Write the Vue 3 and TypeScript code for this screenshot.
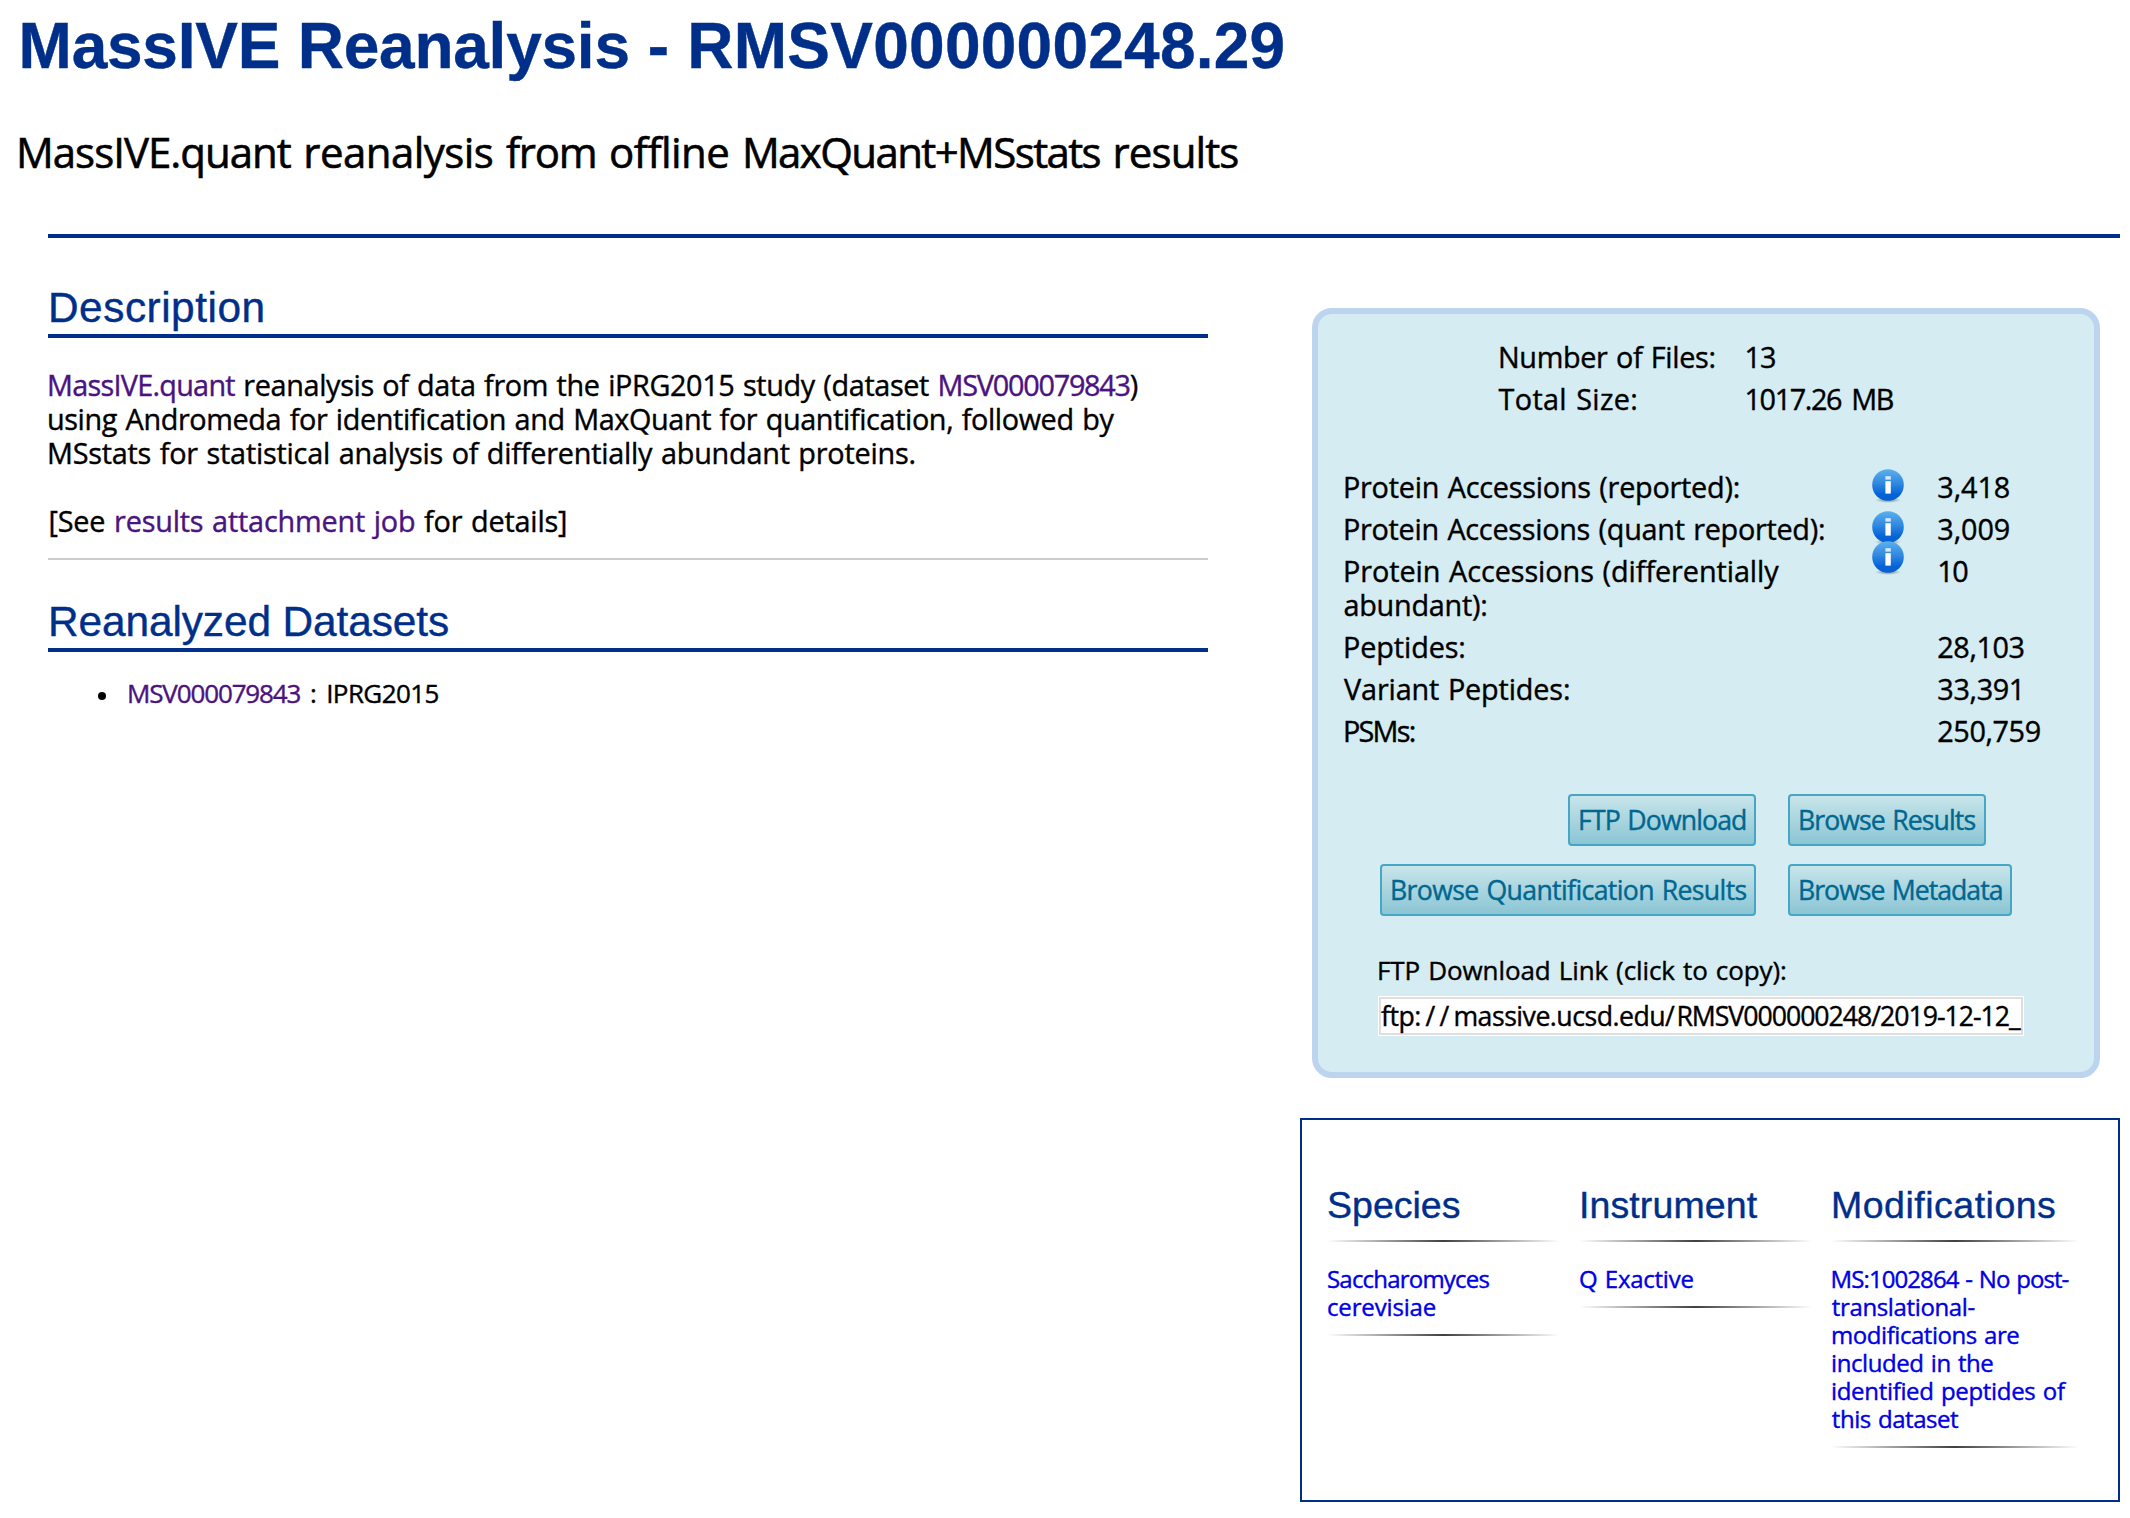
<script setup lang="ts">
interface Line {
  text: string
  track: number
  shift?: number
}
interface Stat {
  label: Line[]
  value: string
  valueTrack: number
  icon?: 'row' | 'raised'
}

const totals = [
  { label: 'Number of Files:', track: -0.35, shift: 2, value: '13', valueTrack: -1 },
  { label: 'Total Size:', track: 0.35, shift: 2.5, value: '1017.26 MB', valueTrack: -1.4 },
]

const stats: Stat[] = [
  { label: [{ text: 'Protein Accessions (reported):', track: -0.24 }], value: '3,418', valueTrack: -0.1, icon: 'row' },
  { label: [{ text: 'Protein Accessions (quant reported):', track: -0.28 }], value: '3,009', valueTrack: -0.1, icon: 'row' },
  {
    label: [
      { text: 'Protein Accessions (differentially', track: -0.07 },
      { text: 'abundant):', track: -0.25, shift: 0.5 },
    ],
    value: '10',
    valueTrack: -1.5,
    icon: 'raised',
  },
  { label: [{ text: 'Peptides:', track: -0.1 }], value: '28,103', valueTrack: -0.4 },
  { label: [{ text: 'Variant Peptides:', track: -0.14, shift: 1 }], value: '33,391', valueTrack: -0.35 },
  { label: [{ text: 'PSMs:', track: -1.75 }], value: '250,759', valueTrack: -0.4 },
]

const buttonRows = [
  [
    { text: 'FTP Download', width: 188, track: -0.88 },
    { text: 'Browse Results', width: 198, track: -0.93 },
  ],
  [
    { text: 'Browse Quantification Results', width: 376, track: -0.63 },
    { text: 'Browse Metadata', width: 224, track: -1 },
  ],
]

const facets: { title: string; track: number; lines: Line[] }[] = [
  {
    title: 'Species',
    track: 0.01,
    lines: [
      { text: 'Saccharomyces', track: -0.8 },
      { text: 'cerevisiae', track: -0.15 },
    ],
  },
  { title: 'Instrument', track: 0.1, lines: [{ text: 'Q Exactive', track: -0.25 }] },
  {
    title: 'Modifications',
    track: 0.5,
    lines: [
      { text: 'MS:1002864 - No post-', track: -0.92, shift: -0.4 },
      { text: 'translational-', track: -0.36, shift: 0.8 },
      { text: 'modifications are', track: -0.44 },
      { text: 'included in the', track: -0.42 },
      { text: 'identified peptides of', track: -0.32 },
      { text: 'this dataset', track: -0.45, shift: 0.8 },
    ],
  },
]

function tracking(line: { track: number; shift?: number }) {
  return { letterSpacing: line.track + 'px', marginLeft: (line.shift ?? 0) + 'px' }
}
</script>

<template>
  <div class="page">
    <h1 class="title"><span>MassIVE Reanalysis</span> - RMSV000000248.29</h1>
    <h2 class="subtitle"><span class="sub-site">MassIVE.quant</span> reanalysis <span class="sub-from">from</span> offline <span class="sub-tools">MaxQuant+MSstats</span> <span class="sub-end">results</span></h2>
    <div class="rule"></div>

    <div class="main">
      <div class="left">
        <h3 class="section-title">Description</h3>
        <div class="prose">
          <div><a class="track-site">MassIVE.quant</a><span class="track-a"> reanalysis of data from the iPRG2015 study (dataset </span><a class="track-id">MSV000079843</a>)</div>
          <div class="track-b">using Andromeda for identification and MaxQuant for quantification, followed by</div>
          <div class="track-c">MSstats for statistical analysis of differentially abundant proteins.</div>
          <div>&nbsp;</div>
          <div class="see">[See <a>results attachment job</a> for details]</div>
        </div>

        <h3 class="section-title tight">Reanalyzed Datasets</h3>
        <ul class="datasets">
          <li><i class="bullet"></i><span><a>MSV000079843</a> : IPRG2015</span></li>
        </ul>
      </div>

      <div class="right">
        <section class="panel">
          <div class="totals">
            <div v-for="t in totals" :key="t.label" class="total">
              <span :style="tracking(t)">{{ t.label }}</span>
              <span class="total-value" :style="{ letterSpacing: t.valueTrack + 'px' }">{{ t.value }}</span>
            </div>
          </div>

          <div class="stats">
            <div v-for="s in stats" :key="s.value" class="stat">
              <div class="stat-label">
                <div v-for="l in s.label" :key="l.text" :style="tracking(l)">{{ l.text }}</div>
              </div>
              <div class="stat-icon">
                <svg v-if="s.icon" :class="['info', s.icon]" width="34" height="36" viewBox="0 0 34 36">
                  <defs>
                    <linearGradient id="infoFill" x1="0" y1="0" x2="0" y2="1">
                      <stop offset="0" stop-color="#5cb0ee" />
                      <stop offset="0.45" stop-color="#3088e0" />
                      <stop offset="0.8" stop-color="#0563d8" />
                      <stop offset="1" stop-color="#0560cf" />
                    </linearGradient>
                    <radialGradient id="infoShade">
                      <stop offset="0" stop-color="#30414f" stop-opacity="0.6" />
                      <stop offset="1" stop-color="#30414f" stop-opacity="0" />
                    </radialGradient>
                  </defs>
                  <ellipse cx="17" cy="32" rx="13" ry="3" fill="url(#infoShade)" />
                  <circle cx="17" cy="17" r="15.8" fill="url(#infoFill)" />
                  <rect x="14.4" y="8.2" width="5.4" height="3.4" fill="#d9e9fa" />
                  <rect x="14.4" y="13.2" width="5.4" height="12.4" fill="#fff" />
                </svg>
              </div>
              <div :style="{ letterSpacing: s.valueTrack + 'px' }">{{ s.value }}</div>
            </div>
          </div>

          <div class="actions">
            <div v-for="(row, i) in buttonRows" :key="i" class="action-row">
              <div v-for="b in row" :key="b.text" class="action-cell">
                <button class="btn" type="button" :style="{ width: b.width + 'px', letterSpacing: b.track + 'px' }">{{ b.text }}</button>
              </div>
            </div>
          </div>

          <div class="ftp">
            <div class="ftp-label">FTP Download Link (click to copy):</div>
            <div class="ftp-input">ftp<span class="scheme">://</span>massive.ucsd.edu<span class="scheme-end">/</span><span class="path">RMSV000000248/2019-12-12_</span></div>
          </div>
        </section>

        <section class="facets">
          <div v-for="f in facets" :key="f.title" class="facet">
            <h4 class="facet-title" :style="{ letterSpacing: f.track + 'px' }">{{ f.title }}</h4>
            <div class="fade"></div>
            <a class="facet-text">
              <div v-for="l in f.lines" :key="l.text" :style="tracking(l)">{{ l.text }}</div>
            </a>
            <div class="fade"></div>
          </div>
        </section>
      </div>
    </div>
  </div>
</template>

<style>
body {
  background: #fff;
}
</style>

<style scoped>
.page {
  box-sizing: border-box;
  width: 2130px;
  height: 1518px;
  padding-top: 9px;
  overflow: hidden;
  background: #fff;
  color: #000;
  font-family: "Trebuchet MS", "Open Sans", "Liberation Sans", sans-serif;
  font-size: 28.8px;
  line-height: 34px;
  white-space: nowrap;
  word-spacing: 1.4px;
  -webkit-text-stroke: 0.4px currentColor;
}
h1,
h2,
h3,
h4 {
  margin: 0;
  font-weight: 400;
}
.title,
.section-title,
.facet-title {
  color: #002f8a;
  font-family: "Liberation Sans", Arial, sans-serif;
  word-spacing: 0;
}
.title {
  margin-left: 18.6px;
  font-size: 64px;
  font-weight: 700;
  line-height: 74px;
  letter-spacing: 0.24px;
}
.title span {
  letter-spacing: -0.24px;
}
.subtitle {
  margin: 44px 0 57px 16px;
  font-size: 42px;
  line-height: 50px;
  letter-spacing: -0.55px;
  word-spacing: 2.2px;
  -webkit-text-stroke-width: 0.6px;
}
.sub-site {
  letter-spacing: -1px;
}
.sub-from {
  letter-spacing: -1.2px;
}
.sub-tools {
  letter-spacing: -1.6px;
}
.sub-end {
  letter-spacing: -0.9px;
}
.rule {
  height: 4px;
  margin: 0 10px 0 48px;
  background: #002f8a;
}
.main {
  display: flex;
  justify-content: space-between;
  padding: 0 10px 0 48px;
}
.left {
  width: 1160px;
}
.section-title {
  margin-top: 46px;
  padding-bottom: 2px;
  border-bottom: 4px solid #002f8a;
  font-size: 42.4px;
  line-height: 48px;
  letter-spacing: 0.5px;
}
.section-title.tight {
  margin-top: 38px;
  letter-spacing: -0.1px;
}
.prose {
  margin-top: 30px;
  padding-bottom: 20px;
  border-bottom: 2px solid #ccc;
}
.prose > div {
  margin-left: -1px;
}
.prose > .see {
  margin-left: 0.5px;
  letter-spacing: -0.18px;
}
.left a {
  color: #4b1380;
}
.track-site {
  letter-spacing: -0.73px;
}
.track-id {
  letter-spacing: -1.23px;
}
.track-a {
  letter-spacing: -0.36px;
}
.track-b {
  letter-spacing: -0.38px;
}
.track-c {
  letter-spacing: -0.22px;
}
.datasets {
  margin: 26px 0 0;
  padding: 0 0 0 50px;
  list-style: none;
  font-size: 26px;
  line-height: 30px;
  letter-spacing: -0.6px;
  word-spacing: 3.7px;
}
.datasets li {
  display: flex;
  align-items: center;
}
.datasets a {
  letter-spacing: -1.14px;
}
.bullet {
  width: 8px;
  height: 8px;
  margin: 6px 21px 0 0;
  border-radius: 50%;
  background: #000;
}
.right {
  width: 820px;
}
.panel {
  box-sizing: border-box;
  height: 770px;
  margin: 70px 20px 0 12px;
  padding-top: 22px;
  border: 6px solid #bcd4ee;
  border-radius: 20px;
  background: #d5ecf2;
}
.totals {
  margin-left: 178px;
}
.total {
  display: grid;
  grid-template-columns: 248.5px auto;
  padding: 4px 0;
}
.total-value {
  word-spacing: 4px;
}
.stats {
  margin: 46px 0 0 25px;
}
.stat {
  display: grid;
  grid-template-columns: 528px 66.3px auto;
  padding: 4px 0;
}
.info {
  display: block;
  margin: -2.3px 0 -10px;
}
.info.raised {
  margin-top: -14px;
}
.actions {
  display: flex;
  flex-direction: column;
  gap: 18px;
  margin-top: 42px;
}
.action-row {
  display: grid;
  grid-template-columns: 438px auto;
  column-gap: 32px;
}
.action-cell:first-child {
  display: flex;
  justify-content: flex-end;
}
.btn {
  display: block;
  box-sizing: border-box;
  height: 52px;
  padding: 0 0 0 8px;
  border: 2px solid #46a6c3;
  border-radius: 4px;
  background: linear-gradient(#c8e5ea, #8bc5d4);
  color: #006791;
  font-family: inherit;
  font-size: 26.67px;
  line-height: 48px;
  text-align: left;
  word-spacing: 1.4px;
}
.ftp {
  margin: 39px 0 0 60px;
}
.ftp-label {
  margin-left: -1px;
  font-size: 26px;
  line-height: 30px;
  letter-spacing: -0.09px;
}
.ftp-input {
  box-sizing: border-box;
  width: 646px;
  height: 40px;
  margin-top: 11px;
  border: 3px solid #e0dede;
  outline: 1px solid #fff;
  outline-offset: -1px;
  background: #fff;
  font-size: 26.67px;
  line-height: 34px;
  letter-spacing: -0.5px;
}
.scheme {
  letter-spacing: 4.2px;
}
.scheme-end {
  letter-spacing: 1.5px;
}
.path {
  letter-spacing: -1.02px;
}
.facets {
  display: flex;
  box-sizing: border-box;
  height: 384px;
  margin-top: 40px;
  padding: 63px 0 0 25px;
  border: 2px solid #002f8a;
}
.facet {
  width: 233px;
  margin-right: 19px;
}
.facet:last-child {
  width: 248px;
  margin-right: 0;
}
.facet-title {
  font-size: 37.5px;
  line-height: 44px;
}
.fade {
  height: 2px;
  margin-top: 13px;
  background: linear-gradient(to right, rgba(0, 0, 0, 0), rgba(0, 0, 0, 0.75), rgba(0, 0, 0, 0));
}
.facet-text {
  display: block;
  margin-top: 23px;
  color: #0000e6;
  font-size: 24px;
  line-height: 28px;
}
</style>
